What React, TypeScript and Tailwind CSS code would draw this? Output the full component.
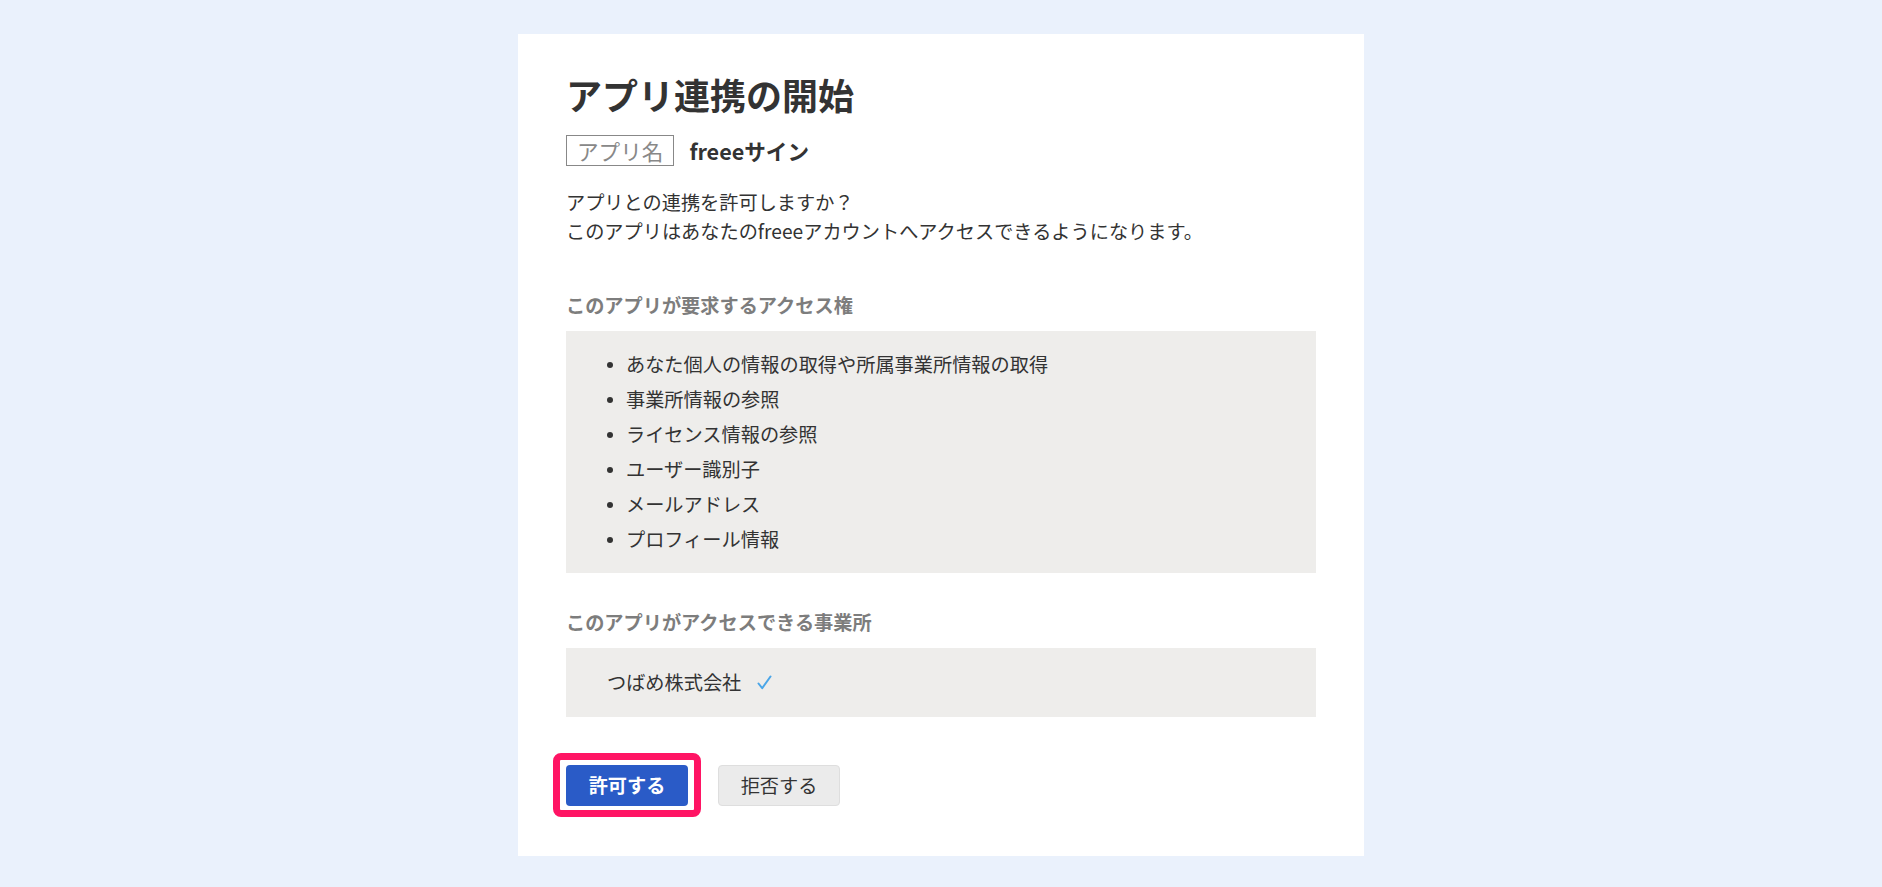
import React from "react";

const scopes = [
  "あなた個人の情報の取得や所属事業所情報の取得",
  "事業所情報の参照",
  "ライセンス情報の参照",
  "ユーザー識別子",
  "メールアドレス",
  "プロフィール情報",
];

function CheckMark() {
  return (
    <svg width="15" height="15" viewBox="0 0 15 15" className="shrink-0">
      <path
        d="M1.5 8.5 L5.2 13.2 L13.5 1.5"
        fill="none"
        stroke="#4ba6e8"
        strokeWidth="2"
        strokeLinecap="round"
        strokeLinejoin="round"
      />
    </svg>
  );
}

export default function App() {
  return (
    <div
      className="min-h-screen bg-[#eaf1fc] pt-[34px] pb-[32px] text-[#333]"
      style={{ fontFamily: '"Noto Sans CJK JP", "Noto Sans", sans-serif' }}
    >
      <div className="mx-auto w-[846px] bg-white px-[48px] pt-[33px] pb-[50px]">
        {/* Title */}
        <h1 className="text-[36px] font-bold leading-[54px] text-[#333]">
          アプリ連携の開始
        </h1>

        {/* App name */}
        <div className="mt-[14px] flex items-center gap-[15px]">
          <span className="h-[31px] border border-[#888] px-[10px] text-[21.6px] leading-[29px] text-[#888]">
            アプリ名
          </span>
          <span className="text-[21.6px] font-bold leading-[29px] text-[#333]">
            freeeサイン
          </span>
        </div>

        {/* Description */}
        <p className="mt-[22px] text-[19.2px] leading-[29px]">
          アプリとの連携を許可しますか？
          <br />
          このアプリはあなたのfreeeアカウントへアクセスできるようになります。
        </p>

        {/* Scopes */}
        <h2 className="mt-[45px] text-[19.2px] font-bold leading-[29px] text-[#7d7d7d]">
          このアプリが要求するアクセス権
        </h2>
        <div className="mt-[11px] bg-[#eeedeb] py-4 pl-[41px] pr-4">
          <ul>
            {scopes.map((s) => (
              <li
                key={s}
                className="flex items-center text-[19.2px] leading-[35px]"
              >
                <span className="mr-[13px] h-[6px] w-[6px] rounded-full bg-[#333]" />
                {s}
              </li>
            ))}
          </ul>
        </div>

        {/* Offices */}
        <h2 className="mt-[35px] text-[19.2px] font-bold leading-[29px] text-[#7d7d7d]">
          このアプリがアクセスできる事業所
        </h2>
        <div className="mt-[11px] flex h-[69px] items-center gap-[16px] bg-[#eeedeb] pl-[41px]">
          <span className="text-[19.2px] leading-[29px]">つばめ株式会社</span>
          <CheckMark />
        </div>

        {/* Actions */}
        <div className="mt-[48px] flex items-center gap-[30px]">
          <div className="relative">
            <button className="h-[41px] w-[122px] rounded-[4px] bg-[#2a5bc7] text-[19.2px] font-bold text-white">
              許可する
            </button>
            <span className="pointer-events-none absolute -top-[12px] -bottom-[11px] -left-[13px] -right-[13px] rounded-[8px] border-[7px] border-[#ff1464]" />
          </div>
          <button className="h-[41px] w-[122px] rounded-[4px] border border-[#dedede] bg-[#ebebeb] text-[19.2px] text-[#333]">
            拒否する
          </button>
        </div>
      </div>
    </div>
  );
}
